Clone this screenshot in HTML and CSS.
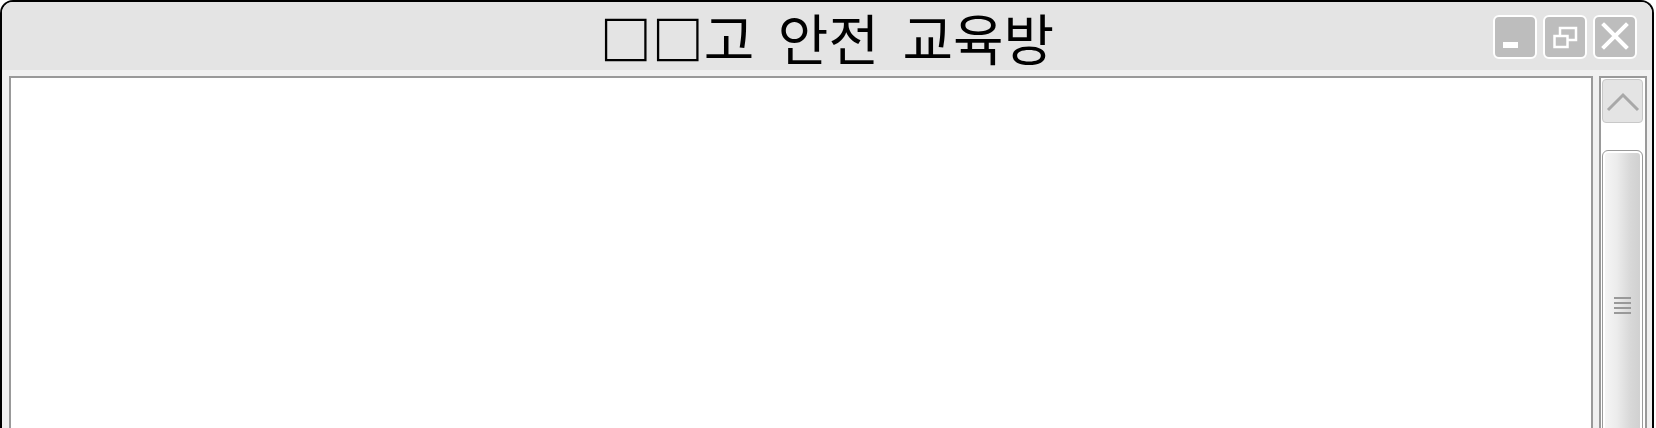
FILE: index.html
```html
<!DOCTYPE html>
<html lang="ko">
<head>
<meta charset="utf-8">
<title>고 안전 교육방</title>
<link rel="stylesheet" href="styles.css">
</head>
<body>
<div class="window">
  <div class="titlebar">
    <div class="title"><span class="tofu">□□</span>고 안전 교육방</div>
    <div class="controls">
      <div class="btn">
        <svg width="40" height="40" viewBox="0 0 40 40"><rect x="8" y="25" width="15" height="6" fill="#fff"/></svg>
      </div>
      <div class="btn">
        <svg width="40" height="40" viewBox="0 0 40 40"><rect x="15" y="11" width="16" height="12" fill="none" stroke="#fff" stroke-width="2.5"/><rect x="9.5" y="19" width="13" height="11" fill="#bdbdbd" stroke="#fff" stroke-width="2.5"/></svg>
      </div>
      <div class="btn">
        <svg width="40" height="40" viewBox="0 0 40 40"><path d="M9 8 L31 30 M31 8 L9 30" stroke="#fff" stroke-width="4" stroke-linecap="square"/></svg>
      </div>
    </div>
  </div>
  <div class="body">
    <div class="content"></div>
    <div class="scroll">
      <div class="up">
        <svg width="39" height="42" viewBox="0 0 39 42"><polyline points="5,30 20,15 35,30" fill="none" stroke="#a8a8a8" stroke-width="3"/></svg>
      </div>
      <div class="thumb">
        <div class="grip"><i></i><i></i><i></i><i></i></div>
      </div>
    </div>
  </div>
</div>
</body>
</html>
```
FILE: styles.css
```css
html, body {
  margin: 0;
  height: 100%;
  overflow: hidden;
  background: #fff;
}
.window {
  box-sizing: border-box;
  width: 1654px;
  height: 480px;
  border: 2px solid #000;
  border-bottom: none;
  border-radius: 13px 13px 0 0;
  background: #f0f0f0;
  display: flex;
  flex-direction: column;
  overflow: hidden;
}
.titlebar {
  flex: none;
  height: 68px;
  background: #e4e4e4;
  display: grid;
  grid-template-columns: 1fr auto 1fr;
  align-items: center;
}
.title {
  grid-column: 2;
  font-family: "Noto Sans CJK KR", sans-serif;
  font-size: 55px;
  line-height: 1.2;
  color: #000;
  white-space: nowrap;
  word-spacing: 8px;
}
.tofu {
  font-family: "Noto Sans CJK KR", sans-serif;
  font-size: 52px;
  font-weight: 700;
}
.controls {
  grid-column: 3;
  justify-self: end;
  align-self: start;
  margin-top: 13px;
  margin-right: 15px;
  display: flex;
  gap: 6px;
}
.btn {
  box-sizing: border-box;
  width: 44px;
  height: 44px;
  border: 2px solid #fff;
  border-radius: 6px;
  background: #bdbdbd;
}
.btn svg { display: block; }
.body {
  flex: 1;
  display: flex;
  gap: 6px;
  padding: 6px 5px 0 7px;
}
.content {
  flex: 1;
  border: 2px solid #999;
  background: #fff;
}
.scroll {
  flex: none;
  box-sizing: border-box;
  width: 48px;
  border: 2px solid #999;
  background: #fff;
  padding: 1px 2px 0 1px;
}
.up {
  box-sizing: border-box;
  height: 44px;
  border: 1px solid #c8c8c8;
  border-radius: 4px;
  background: #e4e4e4;
}
.up svg { display: block; }
.thumb {
  box-sizing: border-box;
  margin-top: 27px;
  height: 310px;
  border: 1px solid #9a9a9a;
  border-radius: 6px 6px 0 0;
  box-shadow: inset 0 0 0 2px #fff;
  background: linear-gradient(to right, #f6f6f6 0%, #ececec 35%, #d8d8d8 70%, #cfcfcf 100%);
  display: flex;
  align-items: center;
  justify-content: center;
}
.grip {
  display: flex;
  flex-direction: column;
  gap: 3px;
}
.grip i {
  display: block;
  width: 17px;
  height: 2px;
  background: #999;
}
```
